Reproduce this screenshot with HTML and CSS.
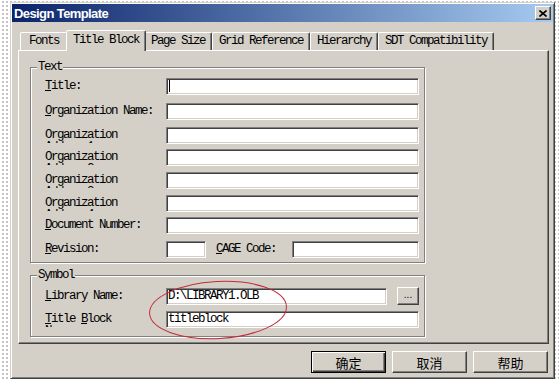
FILE: index.html
```html
<!DOCTYPE html>
<html lang="en">
<head>
    <meta charset="UTF-8">
    <title>Design Template</title>
    <link rel="stylesheet" href="styles.css">
</head>
<body>
    <div class="desk">
        <div class="dialog">
            <div class="titlebar">
                <span class="title">Design Template</span>
                <button class="close">
                    <svg width="8" height="7" viewBox="0 0 8 7"><path d="M0.5 0.5 L7.5 6.5 M7.5 0.5 L0.5 6.5" stroke="#000" stroke-width="1.6" fill="none"/></svg>
                </button>
            </div>

            <div class="tabs">
                <div class="tab first">Fonts</div>
                <div class="tab active">Title Block</div>
                <div class="tab">Page Size</div>
                <div class="tab">Grid Reference</div>
                <div class="tab">Hierarchy</div>
                <div class="tab">SDT Compatibility</div>
            </div>

            <div class="panel">
                <div class="group group-text">
                    <div class="caption">Text</div>
                    <div class="form form-text">
                        <label class="lbl"><u>T</u>itle:</label>
                        <div class="edit"><span class="caret"></span></div>

                        <label class="lbl"><u>O</u>rganization Name:</label>
                        <div class="edit"></div>

                        <label class="lbl">Organization<br>Address1:</label>
                        <div class="edit"></div>

                        <label class="lbl">Organization<br>Address2:</label>
                        <div class="edit"></div>

                        <label class="lbl">Organization<br>Address3:</label>
                        <div class="edit"></div>

                        <label class="lbl">Organization<br>Address4:</label>
                        <div class="edit"></div>

                        <label class="lbl"><u>D</u>ocument Number:</label>
                        <div class="edit"></div>

                        <label class="lbl"><u>R</u>evision:</label>
                        <div class="split">
                            <div class="edit rev"></div>
                            <label class="lbl cage"><u>C</u>AGE Code:</label>
                            <div class="edit grow"></div>
                        </div>
                    </div>
                </div>

                <div class="group group-symbol">
                    <div class="caption">Symbol</div>
                    <div class="form form-symbol">
                        <label class="lbl"><u>L</u>ibrary Name:</label>
                        <div class="split">
                            <div class="edit grow">D:\LIBRARY1.OLB</div>
                            <button class="browse">...</button>
                        </div>

                        <label class="lbl"><u>T</u>itle <u>B</u>lock<br>Name:</label>
                        <div class="edit">titleblock</div>
                    </div>
                </div>

                <svg class="mark" width="142" height="62" viewBox="0 0 142 62">
                    <ellipse cx="70" cy="30" rx="68.5" ry="28.5" transform="rotate(-3 70 30)" fill="none" stroke="#c42a3a" stroke-width="1"/>
                </svg>
            </div>

            <div class="buttons">
                <button class="btn default">确定</button>
                <button class="btn">取消</button>
                <button class="btn">帮助</button>
            </div>
        </div>
    </div>
</body>
</html>
```

FILE: styles.css
```css
body {
    margin: 0;
    background: #fff;
    font-family: 'Liberation Mono', monospace;
    color: #000;
}
.desk {
    height: 380px;
    box-sizing: border-box;
    padding: 2px 0 0 10px;
    background-image: radial-gradient(circle, #c4c4c4 0.8px, transparent 1.3px);
    background-size: 4px 4px;
    background-position: 1px 0;
    overflow: hidden;
}
.dialog {
    width: 545px;
    height: 377px;
    box-sizing: border-box;
    padding: 1px;
    background: #d4d0c8;
    border: 1px solid;
    border-color: #d4d0c8 #404040 #404040 #d4d0c8;
    box-shadow: inset 1px 1px 0 #fff, inset -1px -1px 0 #808080;
}
.titlebar {
    height: 18px;
    display: flex;
    align-items: center;
    justify-content: space-between;
    padding: 0 2px;
    background: linear-gradient(to right, #0a246a, #a6caf0);
}
.title {
    color: #fff;
    font: bold 13px 'Liberation Sans', Arial, sans-serif;
    letter-spacing: -0.6px;
}
.close {
    width: 16px;
    height: 14px;
    box-sizing: border-box;
    padding: 0;
    display: flex;
    align-items: center;
    justify-content: center;
    background: #d4d0c8;
    border: 1px solid;
    border-color: #fff #404040 #404040 #fff;
    box-shadow: inset -1px -1px 0 #808080;
}

/* tabs */
.tabs {
    display: flex;
    align-items: flex-end;
    height: 20px;
    margin: 8px 0 0 6px;
    padding-left: 2px;
}
.tab {
    height: 18px;
    box-sizing: border-box;
    padding: 0 6px;
    border: 1px solid;
    border-bottom: 0;
    border-color: #fff #404040 transparent #fff;
    border-radius: 2px 2px 0 0;
    box-shadow: inset -1px 0 0 #808080;
    font-size: 12.5px;
    letter-spacing: -1.5px;
    line-height: 16px;
    white-space: nowrap;
}
.tab.first {
    padding: 0 8px;
}
.tab.active {
    height: 21px;
    margin: 0 -2px -1px;
    padding: 1px 6px 0;
    position: relative;
    z-index: 1;
    background: #d4d0c8;
}

/* page */
.panel {
    position: relative;
    height: 294px;
    box-sizing: border-box;
    margin: 0 4px 0 6px;
    padding: 16px 0 0 11px;
    border: 1px solid;
    border-color: #fff #404040 #404040 #fff;
    box-shadow: inset -1px -1px 0 #808080;
}
.group {
    width: 395px;
    box-sizing: border-box;
    border: 1px solid #808080;
    box-shadow: inset 1px 1px 0 #fff, 1px 1px 0 #fff;
}
.group-symbol {
    margin-top: 12px;
}
.caption {
    width: max-content;
    margin: -7px 0 0 6px;
    padding: 0 1px;
    background: #d4d0c8;
    font-size: 12.5px;
    letter-spacing: -1.5px;
    line-height: 13px;
}
.form {
    display: grid;
    grid-template-columns: 121px 1fr;
    align-items: start;
    padding: 4px 5px 4px 14px;
}
.form-text {
    grid-template-rows: 25px 24px 22px 23px 23px 22px 24px 17px;
}
.form-symbol {
    grid-template-rows: 23px 17px;
    padding: 6px 5px 8px 14px;
}
.lbl {
    display: block;
    height: 14px;
    margin-top: 2px;
    overflow: hidden;
    font-size: 12.5px;
    letter-spacing: -1.5px;
    line-height: 12px;
    white-space: nowrap;
}
.lbl u {
    text-underline-offset: 1px;
}
.edit {
    height: 17px;
    box-sizing: border-box;
    padding: 0 1px;
    background: #fff;
    border: 1px solid;
    border-color: #808080 #fff #fff #808080;
    box-shadow: inset 1px 1px 0 #404040, inset -1px -1px 0 #d4d0c8;
    font-size: 12.5px;
    letter-spacing: -1.5px;
    line-height: 15px;
    white-space: nowrap;
    overflow: hidden;
}
.caret {
    display: inline-block;
    width: 1px;
    height: 12px;
    margin: 1px 0 0 1px;
    vertical-align: top;
    background: #000;
}
.split {
    display: flex;
    align-items: flex-start;
}
.edit.rev {
    width: 40px;
}
.lbl.cage {
    width: 76px;
    margin-left: 10px;
}
.edit.grow {
    flex: 1;
}
.browse {
    width: 22px;
    height: 18px;
    box-sizing: border-box;
    margin: -1px 0 0 10px;
    padding: 0 0 4px;
    background: #d4d0c8;
    border: 1px solid;
    border-color: #fff #404040 #404040 #fff;
    box-shadow: inset -1px -1px 0 #808080;
    font: 10px 'Liberation Sans', sans-serif;
    color: #000;
}
.mark {
    position: absolute;
    left: 129px;
    top: 229px;
}

/* dialog buttons */
.buttons {
    display: flex;
    justify-content: flex-end;
    gap: 6px;
    margin: 7px 5px 0 0;
}
.btn {
    width: 75px;
    height: 22px;
    box-sizing: border-box;
    padding: 0;
    background: #d4d0c8;
    border: 1px solid;
    border-color: #fff #404040 #404040 #fff;
    box-shadow: inset -1px -1px 0 #808080;
    font: 13px 'Noto Sans CJK SC', sans-serif;
    color: #000;
}
.btn.default {
    border-color: #000;
    box-shadow: inset 1px 1px 0 #fff, inset -1px -1px 0 #404040, inset -2px -2px 0 #808080;
}
```
